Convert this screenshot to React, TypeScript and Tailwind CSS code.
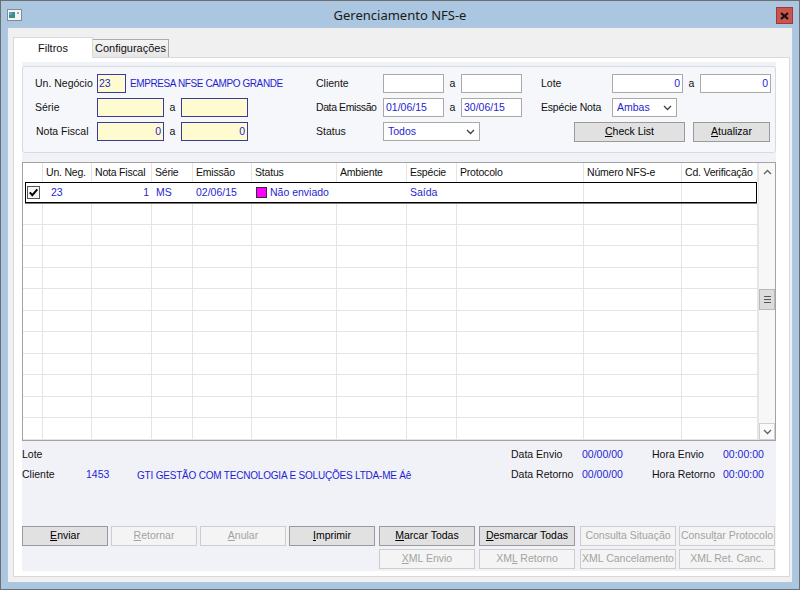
import React from "react";

const BLUE = "text-[#1f1fd0]";

// Botão estilo Windows clássico; u = índice da letra sublinhada
function Btn({
  label,
  u = -1,
  w,
  disabled = false,
  className = "",
}: {
  label: string;
  u?: number;
  w: string;
  disabled?: boolean;
  className?: string;
}) {
  return (
    <div
      className={`${w} ${className} h-[20px] shrink-0 flex items-center justify-center border ${
        disabled
          ? "bg-[#f4f4f4] border-[#cdcdcd] text-[#a3a3a3]"
          : "bg-[#e1e1e1] border-[#9a9a9a] text-black"
      }`}
    >
      {u >= 0 ? (
        <span>
          {label.slice(0, u)}
          <span className="underline underline-offset-[1px]">{label[u]}</span>
          {label.slice(u + 1)}
        </span>
      ) : (
        label
      )}
    </div>
  );
}

function YInput({ w, value = "", right = false }: { w: string; value?: string; right?: boolean }) {
  return (
    <div
      className={`${w} h-[19px] shrink-0 border border-[#3a3a9a] bg-[#fffbd0] ${BLUE} flex items-center px-[2px] ${
        right ? "justify-end" : ""
      }`}
    >
      {value}
    </div>
  );
}

function WInput({ w, value = "", right = false }: { w: string; value?: string; right?: boolean }) {
  return (
    <div
      className={`${w} h-[19px] shrink-0 border border-[#a9a9a9] bg-white ${BLUE} flex items-center px-[2px] ${
        right ? "justify-end" : ""
      }`}
    >
      {value}
    </div>
  );
}

function Chevron({ up = false, color = "#404040" }: { up?: boolean; color?: string }) {
  return (
    <svg width="9" height="6" viewBox="0 0 9 6">
      <polyline
        points={up ? "1,5 4.5,1.5 8,5" : "1,1 4.5,4.5 8,1"}
        fill="none"
        stroke={color}
        strokeWidth="1.3"
      />
    </svg>
  );
}

function Select({ w, value }: { w: string; value: string }) {
  return (
    <div
      className={`${w} h-[19px] shrink-0 border border-[#a9a9a9] bg-white ${BLUE} flex items-center justify-between pl-[4px] pr-[4px]`}
    >
      <span>{value}</span>
      <Chevron />
    </div>
  );
}

const A = () => <span className="w-[17px] shrink-0 text-center">a</span>;

const cols = [
  { w: "w-[20px]", h: "" },
  { w: "w-[49px]", h: "Un. Neg." },
  { w: "w-[60px]", h: "Nota Fiscal" },
  { w: "w-[41px]", h: "Série" },
  { w: "w-[59px]", h: "Emissão" },
  { w: "w-[85px]", h: "Status" },
  { w: "w-[70px]", h: "Ambiente" },
  { w: "w-[50px]", h: "Espécie" },
  { w: "w-[127px]", h: "Protocolo" },
  { w: "w-[98px]", h: "Número NFS-e" },
  { w: "w-[76px]", h: "Cd. Verificação" },
];

function Grid() {
  const empty = Array.from({ length: 11 });
  return (
    <div className="mt-[9px] h-[279px] shrink-0 border border-[#a3a3a3] bg-white flex">
      <div className="flex-1 flex flex-col overflow-hidden">
        {/* cabeçalho */}
        <div className="h-[19px] shrink-0 flex">
          {cols.map((c, i) => (
            <div
              key={i}
              className={`${c.w} shrink-0 border-r border-[#e4e4e4] pl-[3px] flex items-center whitespace-nowrap overflow-hidden tracking-[-0.2px]`}
            >
              {c.h}
            </div>
          ))}
        </div>
        {/* linha com dados */}
        <div className="h-[21px] shrink-0 flex relative">
          <div className="w-[20px] shrink-0 flex items-center justify-end pr-[3px]">
            <svg width="13" height="13" viewBox="0 0 13 13">
              <rect x="0.5" y="0.5" width="12" height="12" fill="#f6f6f6" stroke="#555" />
              <path d="M2.8 6.3 L5.3 9.2 L10.3 3.3" fill="none" stroke="#000" strokeWidth="2" />
            </svg>
          </div>
          <div className={`w-[49px] shrink-0 pl-[8px] flex items-center ${BLUE}`}>23</div>
          <div className={`w-[60px] shrink-0 pr-[3px] flex items-center justify-end ${BLUE}`}>1</div>
          <div className={`w-[41px] shrink-0 pl-[4px] flex items-center ${BLUE}`}>MS</div>
          <div className={`w-[59px] shrink-0 pl-[3px] flex items-center ${BLUE}`}>02/06/15</div>
          <div className={`w-[85px] shrink-0 pl-[4px] flex items-center gap-[3px] ${BLUE}`}>
            <span className="w-[11px] h-[11px] bg-[#ff00ff] border border-[#303030]" />
            Não enviado
          </div>
          <div className="w-[70px] shrink-0" />
          <div className={`w-[50px] shrink-0 pl-[3px] flex items-center ${BLUE}`}>Saída</div>
          <div className="w-[127px] shrink-0 border-r border-[#e4e4e4]" />
          <div className="w-[98px] shrink-0 border-r border-[#e4e4e4]" />
          <div className="w-[76px] shrink-0" />
          <div className="absolute left-[2px] right-[1px] top-0 bottom-0 border border-black shadow-[0_1px_0_#7a7a7a]" />
        </div>
        {empty.map((_, r) => (
          <div key={r} className="h-[21.5px] shrink-0 flex border-b border-[#e4e4e4]">
            {cols.map((c, i) => (
              <div key={i} className={`${c.w} shrink-0 border-r border-[#e4e4e4]`} />
            ))}
          </div>
        ))}
      </div>
      {/* barra de rolagem */}
      <div className="w-[17px] shrink-0 flex flex-col bg-[#f7f7f7] border-l border-[#e6e6e6]">
        <div className="h-[18px] shrink-0 flex items-center justify-center">
          <Chevron up color="#606060" />
        </div>
        <div className="h-[108px] shrink-0" />
        <div className="h-[21px] shrink-0 bg-[#dcdcdc] border border-[#b9b9b9] flex flex-col items-center justify-center gap-[2px]">
          <span className="w-[7px] h-px bg-[#555]" />
          <span className="w-[7px] h-px bg-[#555]" />
          <span className="w-[7px] h-px bg-[#555]" />
        </div>
        <div className="flex-1" />
        <div className="h-[17px] shrink-0 flex items-center justify-center border border-[#d0d0d0] bg-[#fafafa]">
          <Chevron color="#606060" />
        </div>
      </div>
    </div>
  );
}

export default function App() {
  return (
    <div className="w-[800px] h-[590px] border border-[#6e6e6e] bg-[#aac6e0] flex flex-col font-['Liberation_Sans',Arial,sans-serif] text-[10.5px] text-[#111]">
      {/* barra de título */}
      <div className="h-[26px] shrink-0 grid grid-cols-[1fr_auto_1fr] items-center">
        <div className="pl-[6px] pt-[2px]">
          <svg width="15" height="12" viewBox="0 0 15 12">
            <rect x="0.5" y="0.5" width="14" height="11" fill="#f2f5f8" stroke="#8a8a8a" />
            <rect x="2" y="3" width="6" height="6" fill="#3a8f8c" />
            <rect x="2" y="3" width="3" height="3" fill="#5aa0c8" />
            <rect x="10" y="3" width="2" height="2" fill="#9aa" />
          </svg>
        </div>
        <div className="font-['Noto_Sans',sans-serif] text-[13px] text-[#1a1a1a] pt-[3px]">
          Gerenciamento NFS-e
        </div>
        <div className="flex justify-end pr-[6px] pt-[3px]">
          <div className="w-[17px] h-[17px] bg-[#c9554e] border border-[#9a3b35] flex items-center justify-center">
            <svg width="9" height="8" viewBox="0 0 9 8">
              <path d="M1 1 L8 7 M8 1 L1 7" stroke="#111" strokeWidth="2.2" />
            </svg>
          </div>
        </div>
      </div>

      {/* área cliente */}
      <div className="flex-1 mx-[6px] mb-[6px] bg-[#f0f0f0] border border-[#b4c6d8] flex flex-col pt-[9px] pl-[5px] pr-[2px] pb-[5px]">
        {/* abas */}
        <div className="h-[20px] shrink-0 flex items-end">
          <div className="w-[80px] h-[21px] -mb-px relative z-10 bg-white border border-b-0 border-[#d9d9d9] flex items-center justify-center text-[11px]">
            Filtros
          </div>
          <div className="w-[76px] h-[18px] bg-gradient-to-b from-[#f4f4f4] to-[#e6e6e6] border border-b-0 border-l-0 border-[#acacac] flex items-center pl-[2px] text-[11px]">
            Configurações
          </div>
        </div>

        {/* painel */}
        <div className="flex-1 bg-white border border-[#d9d9d9] flex flex-col pt-[4px] pl-[8px] pr-[13px] pb-[5px]">
          <div className="flex-1 bg-[#f1f2f8] flex flex-col">
            {/* filtros */}
            <div className="mt-[4px] h-[87px] shrink-0 rounded-[3px] border border-[#d6dbe3] bg-[#f6f7fb] pt-[7px] pl-[12px] flex flex-col gap-[5px]">
              <div className="h-[19px] flex items-center">
                <div className="w-[281px] shrink-0 flex items-center">
                  <span className="w-[62px] shrink-0">Un. Negócio</span>
                  <div className="w-[29px] h-[19px] shrink-0 border border-[#3a3aa8] bg-[#fffbd0] text-[#1f1fd0] flex items-center px-[1px]">
                    23
                  </div>
                  <span className={`ml-[4px] text-[10px] tracking-[-0.4px] ${BLUE} whitespace-nowrap`}>
                    EMPRESA NFSE CAMPO GRANDE
                  </span>
                </div>
                <div className="w-[225px] shrink-0 flex items-center">
                  <span className="w-[67px] shrink-0">Cliente</span>
                  <WInput w="w-[61px]" />
                  <A />
                  <WInput w="w-[61px]" />
                </div>
                <div className="flex items-center">
                  <span className="w-[71px] shrink-0">Lote</span>
                  <WInput w="w-[71px]" value="0" right />
                  <A />
                  <WInput w="w-[71px]" value="0" right />
                </div>
              </div>

              <div className="h-[19px] flex items-center">
                <div className="w-[281px] shrink-0 flex items-center">
                  <span className="w-[62px] shrink-0">Série</span>
                  <YInput w="w-[67px]" />
                  <A />
                  <YInput w="w-[67px]" />
                </div>
                <div className="w-[225px] shrink-0 flex items-center">
                  <span className="w-[67px] shrink-0 whitespace-nowrap tracking-[-0.4px]">Data Emissão</span>
                  <WInput w="w-[61px]" value="01/06/15" />
                  <A />
                  <WInput w="w-[61px]" value="30/06/15" />
                </div>
                <div className="flex items-center">
                  <span className="w-[71px] shrink-0 whitespace-nowrap tracking-[-0.2px]">Espécie Nota</span>
                  <Select w="w-[65px]" value="Ambas" />
                </div>
              </div>

              <div className="h-[19px] flex items-center">
                <div className="w-[281px] shrink-0 flex items-center">
                  <span className="w-[62px] shrink-0 pl-[1px]">Nota Fiscal</span>
                  <YInput w="w-[67px]" value="0" right />
                  <A />
                  <YInput w="w-[67px]" value="0" right />
                </div>
                <div className="w-[225px] shrink-0 flex items-center">
                  <span className="w-[67px] shrink-0">Status</span>
                  <Select w="w-[97px]" value="Todos" />
                </div>
                <div className="flex items-center ml-[33px]">
                  <Btn w="w-[111px]" label="Check List" u={0} />
                  <Btn w="w-[77px]" label="Atualizar" u={0} className="ml-[8px]" />
                </div>
              </div>
            </div>

            <Grid />

            {/* informações */}
            <div className="mt-[4px] flex flex-col">
              <div className="h-[20px] flex items-center">
                <span className="w-[489px] shrink-0">Lote</span>
                <span className="w-[71px] shrink-0">Data Envio</span>
                <span className={`w-[70px] shrink-0 ${BLUE}`}>00/00/00</span>
                <span className="w-[71px] shrink-0">Hora Envio</span>
                <span className={BLUE}>00:00:00</span>
              </div>
              <div className="h-[20px] flex items-center">
                <span className="w-[64px] shrink-0">Cliente</span>
                <span className={`w-[51px] shrink-0 ${BLUE}`}>1453</span>
                <span className={`w-[374px] shrink-0 text-[10px] tracking-[-0.2px] whitespace-nowrap ${BLUE}`}>
                  GTI GESTÃO COM TECNOLOGIA E SOLUÇÕES LTDA-ME Áê
                </span>
                <span className="w-[71px] shrink-0 whitespace-nowrap">Data Retorno</span>
                <span className={`w-[70px] shrink-0 ${BLUE}`}>00/00/00</span>
                <span className="w-[71px] shrink-0 whitespace-nowrap">Hora Retorno</span>
                <span className={BLUE}>00:00:00</span>
              </div>
            </div>

            {/* botões */}
            <div className="mt-[41px] flex">
              <Btn w="w-[86px]" label="Enviar" u={0} />
              <Btn w="w-[86px]" label="Retornar" u={0} disabled className="ml-[3px]" />
              <Btn w="w-[86px]" label="Anular" u={0} disabled className="ml-[3px]" />
              <Btn w="w-[86px]" label="Imprimir" u={0} className="ml-[3px]" />
              <Btn w="w-[96px]" label="Marcar Todas" u={0} className="ml-[4px]" />
              <Btn w="w-[96px]" label="Desmarcar Todas" u={0} className="ml-[4px]" />
              <Btn w="w-[96px]" label="Consulta Situação" disabled className="ml-[5px]" />
              <Btn w="w-[96px]" label="Consultar Protocolo" u={6} disabled className="ml-[3px]" />
            </div>
            <div className="mt-[3px] flex">
              <Btn w="w-[96px]" label="XML Envio" u={0} disabled className="ml-[357px]" />
              <Btn w="w-[96px]" label="XML Retorno" u={2} disabled className="ml-[4px]" />
              <Btn w="w-[96px]" label="XML Cancelamento" disabled className="ml-[5px]" />
              <Btn w="w-[96px]" label="XML Ret. Canc." disabled className="ml-[3px]" />
            </div>
          </div>
        </div>
      </div>
    </div>
  );
}
